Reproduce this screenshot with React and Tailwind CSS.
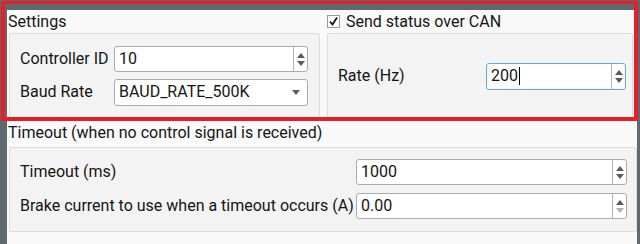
import React from "react";

const Arrows = ({ downDim = false }) => (
  <div className="w-[14px] border-l border-[#b4b4b4] flex flex-col items-center justify-center gap-[3px]">
    <svg width="8" height="5" viewBox="0 0 8 5">
      <path d="M0 5 L4 0 L8 5 Z" fill="#5a5a5a" />
    </svg>
    <svg width="8" height="5" viewBox="0 0 8 5">
      <path d="M0 0 L4 5 L8 0 Z" fill={downDim ? "#b0b0b0" : "#5a5a5a"} />
    </svg>
  </div>
);

const SpinBox = ({ value, className = "", focused = false, downDim = false, cursor = false }) => (
  <div
    className={`flex bg-white rounded-[3px] border ${focused ? "border-[#5fa8ee]" : "border-[#ababab]"} ${className}`}
  >
    <div className="flex-1 flex items-center pl-[4px]">
      <span>{value}</span>
      {cursor && <span className="w-[1px] h-[18px] bg-black ml-[1px]" />}
    </div>
    <Arrows downDim={downDim} />
  </div>
);

const Frame = ({ className = "", children }) => (
  <div className={`bg-[#f3f3f3] border border-[#dcdcdc] rounded-[2px] ${className}`}>{children}</div>
);

export default function App() {
  return (
    <div
      className="relative w-[640px] h-[244px] overflow-hidden bg-[#5e696d] pl-[7px] pt-[10px] pr-[3px] text-[16px] text-[#151515]"
      style={{ fontFamily: "Roboto, 'Liberation Sans', sans-serif" }}
    >
      <div className="h-full bg-[#f9f9f9]">
        {/* top settings row */}
        <div className="flex">
          <div className="w-[320px] pl-[2px]">
            <div className="h-[23px] flex items-center -ml-[1px] leading-none">Settings</div>
            <Frame className="w-[311px] h-[86px] pt-[12px] pl-[10px]">
              <div className="flex items-center h-[26px]">
                <span className="w-[94px]">Controller ID</span>
                <SpinBox value="10" className="w-[194px] h-[26px]" />
              </div>
              <div className="flex items-center h-[26px] mt-[7px]">
                <span className="w-[94px]">Baud Rate</span>
                <div className="w-[194px] h-[27px] flex items-center justify-between bg-white border border-[#ababab] rounded-[3px] pl-[4px] pr-[7px]">
                  <span>BAUD_RATE_500K</span>
                  <svg width="8" height="5" viewBox="0 0 8 5">
                    <path d="M0 0 L4 5 L8 0 Z" fill="#5a5a5a" />
                  </svg>
                </div>
              </div>
            </Frame>
          </div>
          <div className="flex-1">
            <div className="h-[23px] flex items-center gap-[6px] leading-none">
              <div className="w-[13px] h-[13px] border border-[#9a9a9a] bg-white flex items-center justify-center">
                <svg width="11" height="11" viewBox="0 0 11 11">
                  <path d="M2 5.5 L4.5 8.5 L9 1.5" stroke="#111" strokeWidth="1.8" fill="none" />
                </svg>
              </div>
              <span>Send status over CAN</span>
            </div>
            <Frame className="w-[306px] h-[86px] flex items-center pl-[10px]">
              <span className="w-[148px]">Rate (Hz)</span>
              <SpinBox value="200" focused cursor className="w-[140px] h-[27px]" />
            </Frame>
          </div>
        </div>

        {/* timeout section */}
        <div className="pl-[2px]">
          <div className="h-[28px] flex items-center -ml-[1px] leading-none">
            Timeout (when no control signal is received)
          </div>
          <Frame className="w-[628px] h-[85px] pt-[11px] pl-[10px]">
            <div className="flex items-center h-[26px]">
              <span className="w-[336px]">Timeout (ms)</span>
              <SpinBox value="1000" className="w-[271px] h-[26px]" />
            </div>
            <div className="flex items-center h-[26px] mt-[8px]">
              <span className="w-[336px]">Brake current to use when a timeout occurs (A)</span>
              <SpinBox value="0.00" downDim className="w-[271px] h-[26px]" />
            </div>
          </Frame>
        </div>
      </div>

      {/* red highlight annotation */}
      <div className="absolute left-[1px] top-[1px] w-[637px] h-[120px] border-4 border-t-[3px] border-[#e51e27] pointer-events-none" />
    </div>
  );
}
